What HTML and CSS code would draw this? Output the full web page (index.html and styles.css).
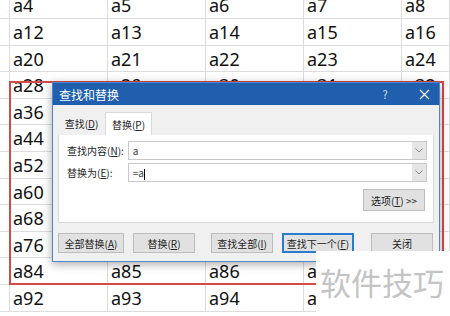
FILE: index.html
```html
<!DOCTYPE html>
<html lang="zh-CN">
<head>
    <meta charset="UTF-8">
    <title>查找和替换</title>
    <link rel="stylesheet" href="styles.css">
</head>
<body>

<div class="sheet" id="sheet"></div>

<!-- red highlight around the dialog area -->
<div class="mark"></div>

<!-- Find & replace dialog -->
<div class="dialog">
    <div class="titlebar">
        <span class="title">查找和替换</span>
        <span class="tb-help">?</span>
        <span class="tb-close">
            <svg width="11" height="11" viewBox="0 0 11 11"><path d="M1 1 L10 10 M10 1 L1 10" stroke="#fff" stroke-width="1.2"/></svg>
        </span>
    </div>
    <div class="dlg-body">
        <div class="tabs">
            <div class="tab">查找(<u>D</u>)</div>
            <div class="tab active">替换(<u>P</u>)</div>
        </div>
        <div class="panel">
            <div class="field">
                <label>查找内容(<u>N</u>):</label>
                <div class="combo">
                    <span class="val">a</span>
                    <span class="drop"><svg width="8" height="5" viewBox="0 0 8 5"><path d="M0.5 0.5 L4 4 L7.5 0.5" fill="none" stroke="#888" stroke-width="1"/></svg></span>
                </div>
            </div>
            <div class="field">
                <label>替换为(<u>E</u>):</label>
                <div class="combo">
                    <span class="val">=a<i class="caret"></i></span>
                    <span class="drop"><svg width="8" height="5" viewBox="0 0 8 5"><path d="M0.5 0.5 L4 4 L7.5 0.5" fill="none" stroke="#888" stroke-width="1"/></svg></span>
                </div>
            </div>
            <div class="opts">
                <button class="btn opt">选项(<u>T</u>) &gt;&gt;</button>
            </div>
        </div>
        <div class="footer">
            <button class="btn">全部替换(<u>A</u>)</button>
            <button class="btn">替换(<u>R</u>)</button>
            <button class="btn">查找全部(<u>I</u>)</button>
            <button class="btn focus">查找下一个(<u>F</u>)</button>
            <button class="btn close">关闭</button>
        </div>
    </div>
</div>

<div class="watermark">软件技巧</div>

<script>
    // fill the spreadsheet cells a4, a5 ... row by row
    const sheet = document.getElementById('sheet');
    for (let r = 0; r < 12; r++) {
        const edge = document.createElement('div');
        edge.className = 'cell edge';
        sheet.appendChild(edge);
        for (let c = 0; c < 5; c++) {
            const cell = document.createElement('div');
            cell.className = 'cell';
            cell.textContent = 'a' + (4 + r * 8 + c);
            sheet.appendChild(cell);
        }
    }
</script>
</body>
</html>
```

FILE: styles.css
```css
body {
    margin: 0;
    width: 450px;
    height: 316px;
    overflow: hidden;
    background: #fff;
    position: relative;
    font-family: "Noto Sans", sans-serif;
}

/* Spreadsheet */
.sheet {
    display: grid;
    grid-template-columns: 10px repeat(4, 98px) 48px;
    grid-auto-rows: 26.6px;
    width: 450px;
    margin-top: -7.6px;
    overflow: hidden;
}
.cell {
    border-right: 1px solid #dcdcdc;
    border-bottom: 1px solid #dcdcdc;
    font-size: 18px;
    line-height: 26px;
    padding-left: 3px;
    color: #111;
    overflow: hidden;
    white-space: nowrap;
}
.cell.edge {
    padding: 0;
}

.mark {
    position: absolute;
    left: 9px;
    top: 81px;
    width: 431px;
    height: 200px;
    border: 2px solid #d6494a;
}

/* Dialog */
.dialog {
    position: absolute;
    left: 52px;
    top: 82px;
    width: 388px;
    height: 180px;
    box-sizing: border-box;
    background: #f0f0f0;
    border: 1px solid #4f86c9;
    box-shadow: 0 2px 9px rgba(0, 0, 0, 0.35);
    font-family: "Noto Sans CJK SC", sans-serif;
    font-size: 10px;
    color: #222;
    white-space: nowrap;
}
.titlebar {
    height: 22px;
    background: #1f5fae;
    color: #fff;
    display: flex;
    align-items: center;
    padding-left: 6px;
}
.title {
    flex: 1;
    font-size: 12px;
}
.tb-help {
    width: 20px;
    font-size: 11px;
    color: #cfe0f5;
    margin-right: 14px;
    text-align: center;
}
.tb-close {
    width: 30px;
    display: flex;
    justify-content: center;
}
.dlg-body {
    padding: 7px 5px 0;
}
.tabs {
    display: flex;
    height: 23px;
}
.tab {
    width: 47px;
    line-height: 23px;
    text-align: center;
}
.tab.active {
    background: #fff;
    border: 1px solid #d9d9d9;
    border-bottom: none;
    box-sizing: border-box;
}
.panel {
    background: #fff;
    height: 88px;
    box-sizing: border-box;
    border: 1px solid #d9d9d9;
    border-top: none;
    padding: 6px 6px 0 8px;
}
.field {
    display: flex;
    align-items: center;
    height: 19px;
    margin-bottom: 3px;
}
.field label {
    width: 61px;
}
.combo {
    width: 301px;
    height: 19px;
    box-sizing: border-box;
    border: 1px solid #c8c8c8;
    display: flex;
    align-items: center;
}
.val {
    flex: 1;
    padding-left: 4px;
    font-size: 10px;
    color: #444;
}
.caret {
    display: inline-block;
    width: 1px;
    height: 11px;
    background: #000;
    vertical-align: middle;
}
.drop {
    width: 14px;
    height: 17px;
    background: #e5e5e5;
    display: flex;
    align-items: center;
    justify-content: center;
}
.opts {
    display: flex;
    justify-content: flex-end;
    padding-right: 2px;
    margin-top: 7px;
}
.btn {
    font-family: inherit;
    font-size: 10px;
    color: #222;
    background: #e1e1e1;
    border: 1px solid #bdbdbd;
    height: 20px;
    padding: 0;
    margin: 0;
    white-space: nowrap;
}
.btn.opt {
    width: 62px;
    height: 22px;
}
.footer {
    display: flex;
    margin-top: 10px;
}
.footer .btn {
    width: 66px;
    margin-right: 9px;
}
.footer .btn:nth-child(2) {
    width: 62px;
    margin-right: 16px;
}
.footer .btn:nth-child(3) {
    width: 62px;
}
.footer .btn.focus {
    width: 72px;
    border: 2px solid #2a7ad2;
    margin-right: 17px;
}
.footer .btn.close {
    width: 62px;
    margin-right: 0;
}

.watermark {
    position: absolute;
    left: 316px;
    top: 251px;
    width: 134px;
    height: 65px;
    background: #fff;
    color: #c4c4c4;
    font-family: "Noto Sans CJK SC", sans-serif;
    font-size: 31px;
    line-height: 62px;
    padding-left: 4px;
    box-sizing: border-box;
}
```
